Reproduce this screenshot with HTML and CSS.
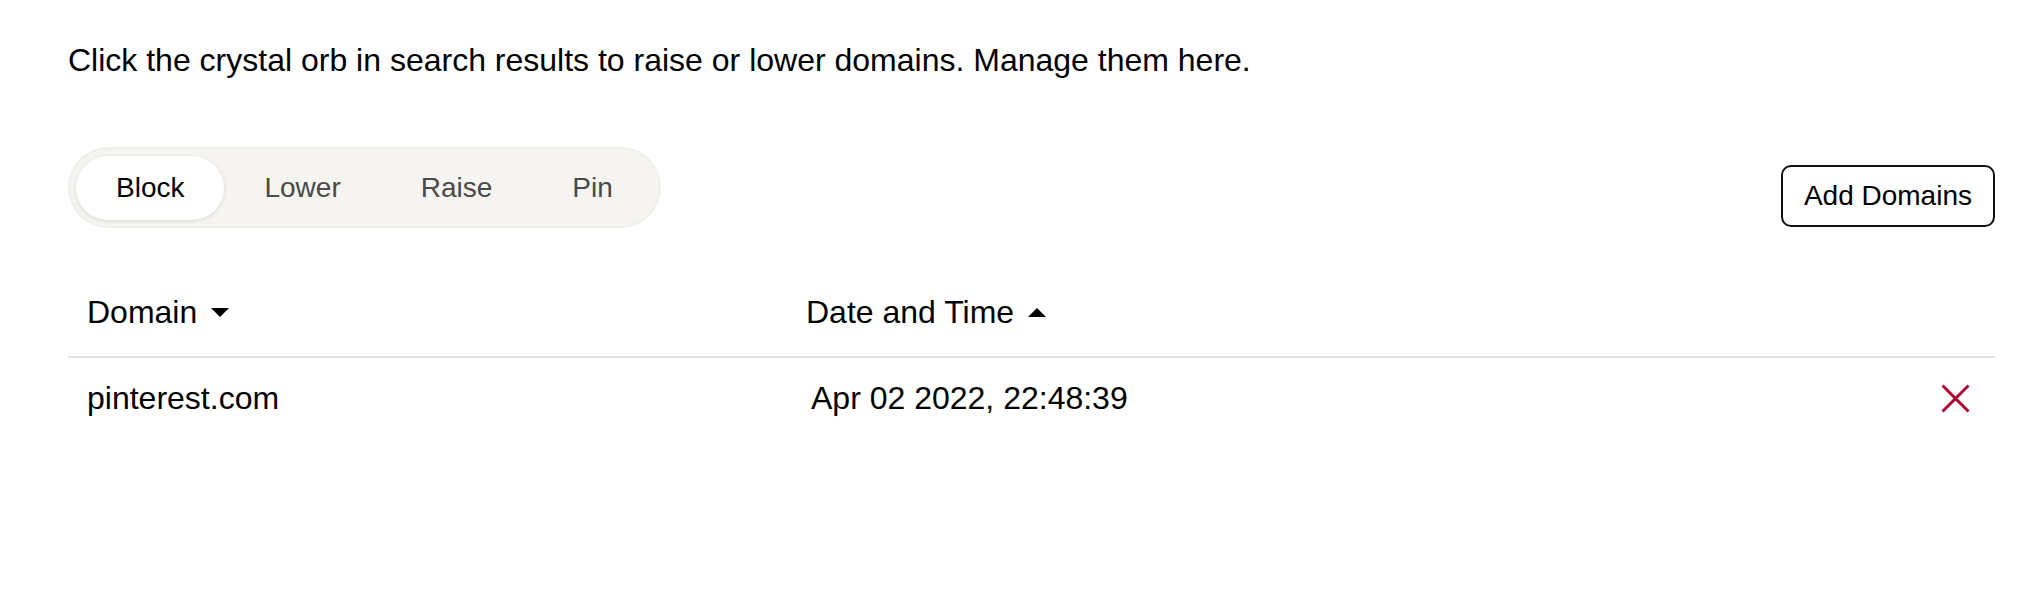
FILE: index.html
```html
<!DOCTYPE html>
<html lang="en">
<head>
<meta charset="utf-8">
<title>Domains</title>
<link rel="stylesheet" href="styles.css">
</head>
<body>
<main class="page">
  <p class="intro">Click the crystal orb in search results to raise or lower domains. Manage them here.</p>
  <div class="toolbar">
    <div class="segmented">
      <button class="seg active">Block</button>
      <button class="seg">Lower</button>
      <button class="seg">Raise</button>
      <button class="seg">Pin</button>
    </div>
    <button class="add-btn">Add Domains</button>
  </div>
  <div class="table">
    <div class="row head">
      <div class="cell col-domain">Domain <svg class="caret" width="18" height="9" viewBox="0 0 18 9"><polygon points="0,0 18,0 9,9" fill="#000"/></svg></div>
      <div class="cell col-date head-date">Date and Time <svg class="caret" width="18" height="9" viewBox="0 0 18 9"><polygon points="0,9 18,9 9,0" fill="#000"/></svg></div>
      <div class="cell col-action"></div>
    </div>
    <div class="row">
      <div class="cell col-domain">pinterest.com</div>
      <div class="cell col-date row-date">Apr 02 2022, 22:48:39</div>
      <div class="cell col-action">
        <button class="remove" aria-label="Remove">
          <svg width="29" height="29" viewBox="0 0 29 29"><path d="M1.5 1.5 L27.5 27.5 M27.5 1.5 L1.5 27.5" stroke="#b0002f" stroke-width="3" fill="none"/></svg>
        </button>
      </div>
    </div>
  </div>
</main>
</body>
</html>
```

FILE: styles.css
```css
* { box-sizing: border-box; }

body {
  margin: 0;
  background: #fff;
  color: #000;
  font-family: "Liberation Sans", Arial, Helvetica, sans-serif;
}

.page {
  padding: 0 44px 0 68px;
}

.intro {
  margin: 42px 0 0;
  font-size: 32px;
  line-height: 37px;
}

.toolbar {
  margin-top: 68px;
  display: flex;
  justify-content: space-between;
  align-items: flex-end;
}

.segmented {
  display: flex;
  padding: 9px 8px 8px;
  background: #f5f4f0;
  border-radius: 41px;
  box-shadow: inset 0 0 0 2px #f0efeb;
}

.seg {
  height: 64px;
  padding: 0 40px;
  border: 0;
  border-radius: 32px;
  background: transparent;
  font-family: inherit;
  font-size: 28px;
  color: #4a4a4a;
}

.seg.active {
  background: #fff;
  color: #000;
  box-shadow: 0 1px 4px rgba(0, 0, 0, 0.12);
}

.add-btn {
  height: 62px;
  margin-bottom: 1px;
  padding: 0 21px;
  border: 2px solid #111;
  border-radius: 10px;
  background: #fff;
  font-family: inherit;
  font-size: 28px;
  color: #000;
}

.row {
  display: grid;
  grid-template-columns: 719px 1fr auto;
  align-items: center;
  font-size: 32px;
  line-height: 36px;
}

.row.head {
  padding: 66px 0 26px;
  border-bottom: 2px solid #e3e3e3;
}

.row:not(.head) {
  padding-top: 22px;
}

.cell {
  display: flex;
  align-items: center;
}

.col-domain { padding-left: 19px; }
.head-date { padding-left: 19px; }
.row-date { padding-left: 24px; }
.col-action { padding-right: 25px; }

.caret { margin-left: 14px; }

.remove {
  display: flex;
  padding: 0;
  border: 0;
  background: none;
}
```
